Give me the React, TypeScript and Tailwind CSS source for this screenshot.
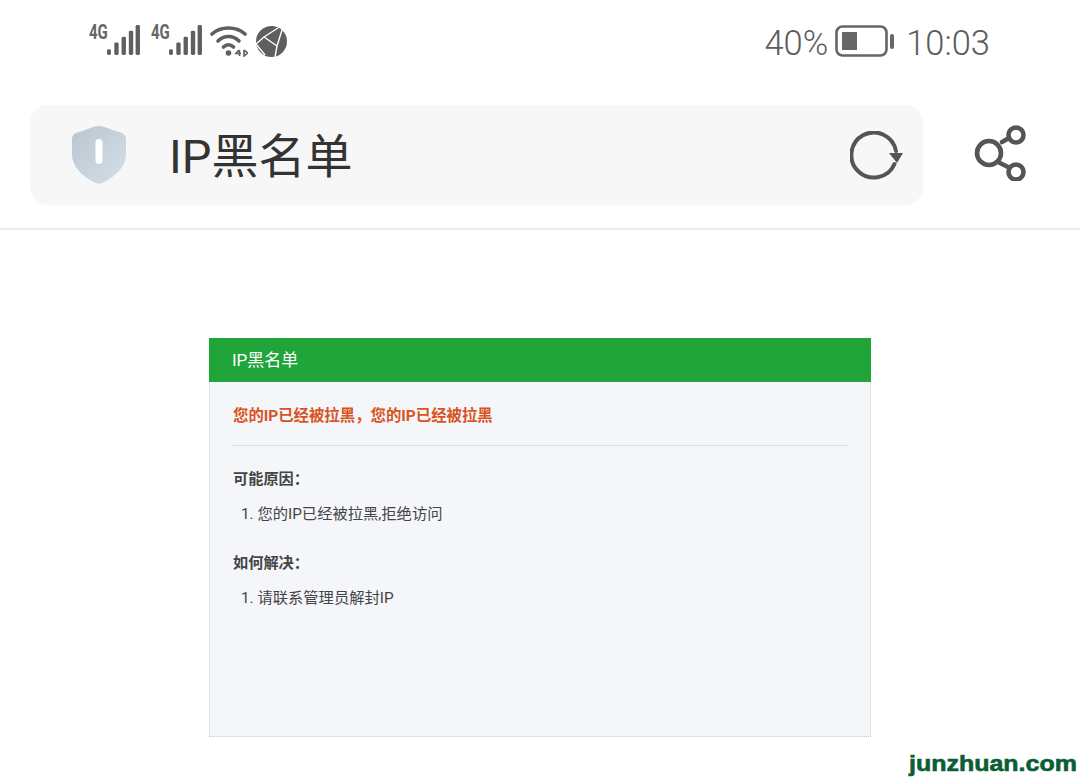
import React from "react";

const cjk = "font-['Roboto','Noto_Sans_CJK_SC',sans-serif]";

function Signal() {
  return (
    <svg width="33" height="31" viewBox="0 0 34 32" fill="#5f5f5f">
      <rect x="0" y="25" width="4" height="6" rx="1.5" />
      <rect x="7.5" y="18" width="4.5" height="13" rx="1.5" />
      <rect x="15" y="12" width="4.5" height="19" rx="1.5" />
      <rect x="22.5" y="6" width="4.5" height="25" rx="1.5" />
      <rect x="29.5" y="0" width="4.5" height="31" rx="1.5" />
    </svg>
  );
}

function Network() {
  return (
    <div className="flex items-start">
      <span className="mt-[-2px] w-[18px] text-[20px] leading-[20px] font-bold text-[#666666] font-['Roboto',sans-serif] scale-x-75 origin-left whitespace-nowrap">
        4G
      </span>
      <div className="mt-[1px]">
        <Signal />
      </div>
    </div>
  );
}

function Wifi() {
  return (
    <svg width="38" height="32" viewBox="0 0 38 32" fill="none" stroke="#5f5f5f" strokeWidth="3.6" strokeLinecap="round">
      <path d="M2 9 C11 1 26 1 35 9" />
      <path d="M8 16 C14 10 23 10 29 16" />
      <path d="M13.5 22 C16.5 19 20.5 19 23.5 22" />
      <circle cx="18.5" cy="28" r="2.8" fill="#5f5f5f" stroke="none" />
      <path d="M29 25 L26 28.5 H31 M29.5 25 V31 M34 25 V31 L37.5 28 L34 25" strokeWidth="1.6" strokeLinecap="butt" />
    </svg>
  );
}

function Globe() {
  return (
    <svg width="33" height="33" viewBox="0 0 33 33">
      <circle cx="16.5" cy="16.5" r="15.5" fill="#5f5f5f" />
      <path d="M1 19 L9 12 L23 3 M9 12 L22 21 L20 32 M22 21 L27 5 M1 19 L10 30" fill="none" stroke="#ffffff" strokeWidth="1.4" />
    </svg>
  );
}

function Battery() {
  return (
    <svg width="60" height="34" viewBox="0 0 60 34">
      <rect x="1.5" y="2.5" width="50" height="29" rx="6" fill="none" stroke="#666666" strokeWidth="2.6" />
      <rect x="7" y="8" width="15" height="18" fill="#666666" />
      <rect x="55" y="10" width="4" height="15" rx="2" fill="#666666" />
    </svg>
  );
}

function Shield() {
  return (
    <svg width="56" height="58" viewBox="0 0 56 58">
      <defs>
        <linearGradient id="shield" x1="0" y1="0" x2="1" y2="1">
          <stop offset="0" stopColor="#b9c5d1" />
          <stop offset="1" stopColor="#d5dfe6" />
        </linearGradient>
      </defs>
      <path d="M28 0 C33 0 38 3 48 6 C53 7.5 55 9 55 14 V28 C55 42 42 52 31 57 C29 58 27 58 25 57 C14 52 1 42 1 28 V14 C1 9 3 7.5 8 6 C18 3 23 0 28 0 Z" fill="url(#shield)" />
      <rect x="24.5" y="13" width="7" height="25" rx="3.5" fill="#ffffff" />
    </svg>
  );
}

function Reload() {
  return (
    <svg width="54" height="50" viewBox="0 0 54 50" fill="none">
      <path d="M44.5 33 A22.5 22.5 0 1 1 46 20" stroke="#555555" strokeWidth="4" strokeLinecap="round" />
      <path d="M39 22 H53 L47 32 Z" fill="#555555" />
    </svg>
  );
}

function Share() {
  return (
    <svg width="54" height="58" viewBox="0 0 54 58" fill="none" stroke="#555555" strokeWidth="4.6">
      <circle cx="15" cy="30" r="12" />
      <circle cx="42" cy="12" r="7.5" />
      <circle cx="42" cy="49" r="7.5" />
      <path d="M28 19 L35 15" strokeLinecap="round" />
      <path d="M24 39 L36 45" />
    </svg>
  );
}

export default function App() {
  return (
    <div className={`relative w-[1080px] h-[781px] overflow-hidden bg-white ${cjk}`}>
      <div className="flex justify-between h-[105px] pl-[89px] pr-[90px] pt-[24px]">
        <div className="flex items-start gap-[11px]">
          <Network />
          <Network />
          <div className="mt-[1px] ml-[-3px] flex gap-[7px]">
            <Wifi />
            <Globe />
          </div>
        </div>
        <div className="flex items-start text-[34.5px] leading-[38px] font-light text-[#5c5c5c]">
          <span>40%</span>
          <div className="ml-[7px] mr-[11px]">
            <Battery />
          </div>
          <span>10:03</span>
        </div>
      </div>

      <div className="flex items-center pl-[30px] pr-[53px] pb-[23px] border-b-2 border-[#ececec]">
        <div className="flex items-center w-[893px] h-[100px] rounded-[18px] bg-[#f7f7f8] pl-[41px] pr-[19px]">
          <Shield />
          <span className="ml-[42px] mt-[4px] flex-1 text-[47px] leading-[56px] text-[#333333]">IP黑名单</span>
          <div className="mt-[2px]">
            <Reload />
          </div>
        </div>
        <div className="ml-auto mt-[-6px] mr-[-1px]">
          <Share />
        </div>
      </div>

      <div className="mx-[209px] mt-[108px] h-[399px] border border-dotted border-[#c9cfc9] bg-[#f4f6fa]">
        <div className="mx-[-1px] mt-[-1px] h-[44px] bg-[#20a53a] pl-[23px] text-[17px] leading-[44px] text-white">
          IP黑名单
        </div>
        <div className="px-[23px]">
          <div className="h-[64px] border-b border-dotted border-[#c9cfc0] pt-[24px] text-[15.4px] leading-[20px] font-bold text-[#d9531e]">
            您的IP已经被拉黑，您的IP已经被拉黑
          </div>
          <div className="pt-[23px] text-[15.2px] leading-[20px] font-bold text-[#444444]">可能原因：</div>
          <div className="pl-[8px] pt-[15px] text-[15.3px] leading-[20px] text-[#444444]">1. 您的IP已经被拉黑,拒绝访问</div>
          <div className="pt-[29px] text-[15.2px] leading-[20px] font-bold text-[#444444]">如何解决：</div>
          <div className="pl-[8px] pt-[15px] text-[15.3px] leading-[20px] text-[#444444]">1. 请联系管理员解封IP</div>
        </div>
      </div>

      <span className="absolute left-[909px] top-[752px] text-[22px] leading-[24px] font-bold text-[#0b5d36] [-webkit-text-stroke:0.6px_#0b5d36] scale-x-[1.135] origin-left font-['Liberation_Sans',sans-serif] whitespace-nowrap">
        junzhuan.com
      </span>
    </div>
  );
}
